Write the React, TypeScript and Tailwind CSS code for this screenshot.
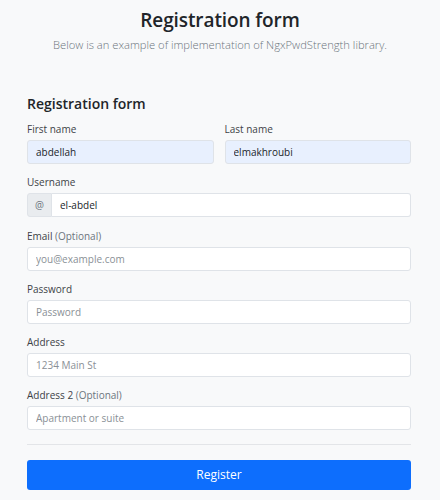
export default function App() {
  const font = { fontFamily: '"Open Sans", "Noto Sans", sans-serif' };

  const inputBase =
    "h-[24px] w-full rounded-[3px] border border-[#dfe3e8] px-[8px] text-[10px] text-[#212529] placeholder:text-[#8a9096] outline-none";

  return (
    <div className="min-h-[500px] w-[440px] bg-[#f8f9fa] text-[#212529]" style={font}>
      <div className="pt-[8px] text-center">
        <h2 className="text-[19px] leading-[24px] font-semibold tracking-[-0.1px]">Registration form</h2>
        <p className="mt-[5px] text-[11.2px] leading-[16px] font-light text-[#6c757d]">
          Below is an example of implementation of NgxPwdStrength library.
        </p>
      </div>

      <div className="mt-[42px] pl-[27px] pr-[29px]">
        <h4 className="text-[14px] leading-[18px] font-semibold">Registration form</h4>

        <div className="mt-[9px] flex flex-col gap-[11.3px]">
          <div className="grid grid-cols-2 gap-[11px]">
            <Field label="First name">
              <input className={inputBase + " bg-[#e8f0fe]"} defaultValue="abdellah" />
            </Field>
            <Field label="Last name">
              <input className={inputBase + " bg-[#e8f0fe]"} defaultValue="elmakhroubi" />
            </Field>
          </div>

          <Field label="Username">
            <div className="flex h-[24px] w-full">
              <span className="flex w-[25px] items-center justify-center rounded-l-[3px] border border-[#dfe3e8] bg-[#e9ecef] text-[10px] text-[#6c757d]">
                @
              </span>
              <input
                className="h-[24px] flex-1 rounded-r-[3px] border border-l-0 border-[#dfe3e8] bg-white px-[8px] text-[10px] text-[#212529] outline-none"
                defaultValue="el-abdel"
              />
            </div>
          </Field>

          <Field label="Email" optional>
            <input className={inputBase + " bg-white"} placeholder="you@example.com" />
          </Field>

          <Field label="Password">
            <input className={inputBase + " bg-white"} type="password" placeholder="Password" />
          </Field>

          <Field label="Address">
            <input className={inputBase + " bg-white"} placeholder="1234 Main St" />
          </Field>

          <Field label="Address 2" optional>
            <input className={inputBase + " bg-white"} placeholder="Apartment or suite" />
          </Field>
        </div>

        <hr className="mt-[14px] border-t border-[#e3e5e8]" />

        <button className="mt-[15px] h-[30px] w-full rounded-[3px] bg-[#0d6efd] text-[12px] text-white">
          Register
        </button>
      </div>
    </div>
  );
}

function Field({
  label,
  optional,
  children,
}: {
  label: string;
  optional?: boolean;
  children: React.ReactNode;
}) {
  return (
    <div className="flex flex-col">
      <label className="mb-[4px] text-[10px] leading-[14px] text-[#3d4247]">
        {label}
        {optional && <span className="text-[#6c757d]"> (Optional)</span>}
      </label>
      {children}
    </div>
  );
}
